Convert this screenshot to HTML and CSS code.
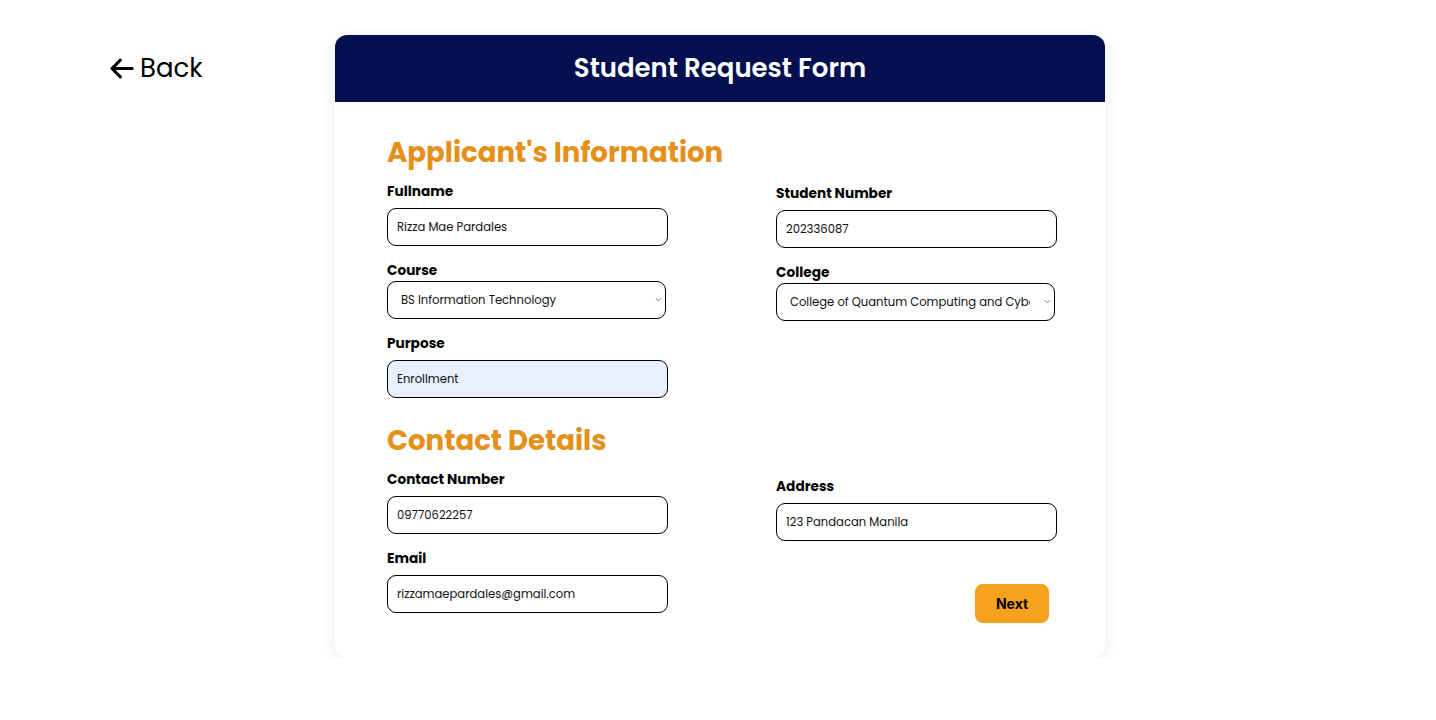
FILE: index.html
```html
<!DOCTYPE html>
<html lang="en">
<head>
<meta charset="utf-8">
<title>Student Request Form</title>
<link rel="stylesheet" href="styles.css">
</head>
<body>
<div class="page">
  <div class="back-col">
    <a class="back" href="#">
      <svg class="back-icon" viewBox="0 0 24 24" aria-hidden="true"><path d="M21.5 12H3.5M11 4.5L3.5 12l7.5 7.5" fill="none" stroke="#000" stroke-width="2.7" stroke-linecap="round" stroke-linejoin="round"/></svg>
      <span>Back</span>
    </a>
  </div>
  <main class="card">
    <header class="card-header">
      <h1>Student Request Form</h1>
    </header>
    <form class="card-body">
      <h2 class="section-title">Applicant's Information</h2>
      <div class="grid">
        <div class="col">
          <div class="field">
            <label>Fullname</label>
            <input class="input" type="text" value="Rizza Mae Pardales">
          </div>
          <div class="field field-select">
            <label>Course</label>
            <div class="select-wrap">
              <select class="input select"><option>BS Information Technology</option></select>
              <svg class="chev" viewBox="0 0 8 5" aria-hidden="true"><path d="M1 1l3 3 3-3" fill="none" stroke="#555" stroke-width="0.9"/></svg>
            </div>
          </div>
          <div class="field">
            <label>Purpose</label>
            <input class="input filled" type="text" value="Enrollment">
          </div>
        </div>
        <div class="col col-right-a">
          <div class="field">
            <label>Student Number</label>
            <input class="input" type="text" value="202336087">
          </div>
          <div class="field field-select">
            <label>College</label>
            <div class="select-wrap">
              <select class="input select"><option>College of Quantum Computing and Cybersecurity</option></select>
              <svg class="chev" viewBox="0 0 8 5" aria-hidden="true"><path d="M1 1l3 3 3-3" fill="none" stroke="#555" stroke-width="0.9"/></svg>
            </div>
          </div>
        </div>
      </div>

      <h2 class="section-title second">Contact Details</h2>
      <div class="grid">
        <div class="col">
          <div class="field">
            <label>Contact Number</label>
            <input class="input" type="text" value="09770622257">
          </div>
          <div class="field">
            <label>Email</label>
            <input class="input" type="text" value="rizzamaepardales@gmail.com">
          </div>
        </div>
        <div class="col col-right-b">
          <div class="field">
            <label>Address</label>
            <input class="input" type="text" value="123 Pandacan Manila">
          </div>
          <button class="next" type="button">Next</button>
        </div>
      </div>
    </form>
  </main>
</div>
</body>
</html>
```

FILE: styles.css
```css
* { box-sizing: border-box; }
html, body { margin: 0; background: #fff; }
body {
  font-family: "Poppins", "Inter", "Noto Sans", sans-serif;
  color: #000;
}
.page {
  display: grid;
  grid-template-columns: 335px 770px;
  padding-top: 35px;
}
.back-col {
  padding-left: 108px;
  padding-top: 16px;
}
.back {
  display: inline-flex;
  align-items: center;
  gap: 5px;
  color: #000;
  text-decoration: none;
  font-size: 26px;
  line-height: 34px;
  font-weight: 400;
}
.back-icon { width: 27px; height: 27px; }
.card {
  background: #fff;
  border-radius: 12px;
  box-shadow: 0 4px 16px rgba(0,0,0,0.08);
  overflow: hidden;
}
.card-header {
  background: #040f50;
  height: 67px;
  display: flex;
  align-items: center;
  justify-content: center;
}
.card-header h1 {
  margin: 0;
  color: #fff;
  font-size: 26px;
  font-weight: 600;
}
.card-body {
  padding: 33px 49px 35px 52px;
}
.section-title {
  margin: 0 0 10px;
  color: #e5901a;
  font-size: 27.6px;
  line-height: 36px;
  font-weight: 700;
}
.section-title.second { margin-top: 25px; }
.grid {
  display: grid;
  grid-template-columns: 280px 280px;
  justify-content: space-between;
}
.col {
  display: flex;
  flex-direction: column;
  gap: 14px;
}
.col-right-a { padding-top: 2px; }
.col-right-b { padding-top: 7px; }
.field {
  display: flex;
  flex-direction: column;
  gap: 7px;
}
.field-select { gap: 1px; }
.field label {
  font-size: 13.7px;
  line-height: 20px;
  font-weight: 700;
  padding-top: 1px;
  margin-bottom: -1px;
}
.input {
  width: 281px;
  height: 38px;
  border: 1.5px solid #000;
  border-radius: 9px;
  padding: 0 9px;
  font-family: inherit;
  font-size: 11.6px;
  color: #111;
  background: #fff;
  outline: none;
}
.select-wrap {
  position: relative;
  width: 279px;
}
.select {
  width: 279px;
  height: 38px;
  padding: 0 24px 0 13px;
  appearance: none;
  -webkit-appearance: none;
}
.chev {
  position: absolute;
  right: 4px;
  top: 16px;
  width: 7px;
  height: 5px;
  pointer-events: none;
}
.filled { background: #e8f0fe; }
.next {
  align-self: flex-end;
  margin-right: 7px;
  margin-top: 29px;
  width: 74px;
  height: 39px;
  border: none;
  border-radius: 8px;
  background: #f7a21c;
  font-family: "Inter", sans-serif;
  font-weight: 700;
  font-size: 14px;
  color: #000;
}
```
